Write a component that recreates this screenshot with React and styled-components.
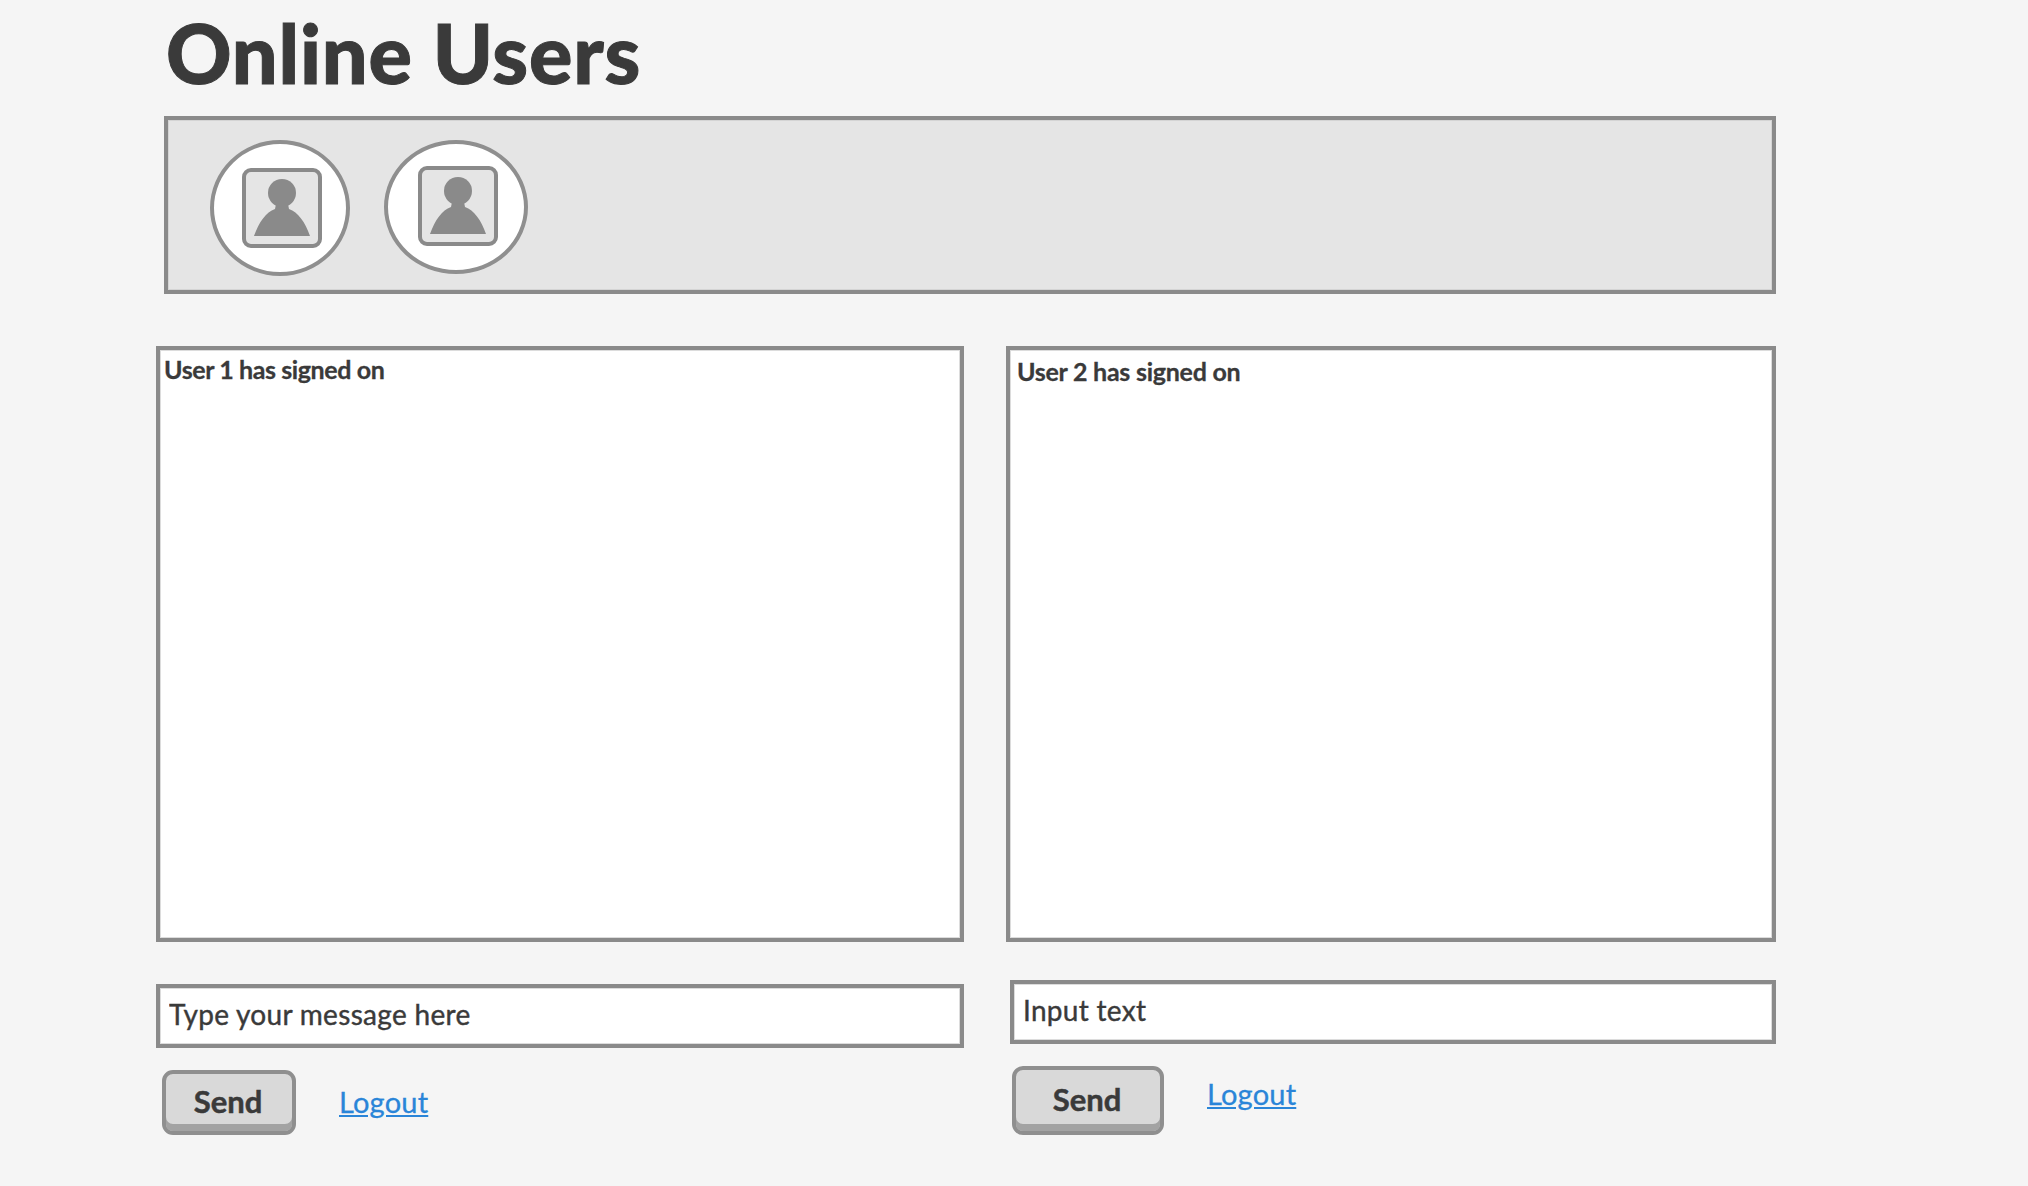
import React from 'react';
import styled, { createGlobalStyle } from 'styled-components';

const GlobalStyle = createGlobalStyle`
  html, body {
    margin: 0;
    background: #f5f5f5;
  }
  body {
    font-family: Lato, "Open Sans", sans-serif;
    color: #3a3a3a;
  }
`;

export default function App() {
  return (
    <>
      <GlobalStyle />
      <Page>
        <Title>Online Users</Title>
        <UsersPanel>
          <Avatar $w={140} $h={136} $iconTop={28} $iconLeft={32} />
          <Avatar $w={144} $h={134} $iconTop={26} $iconLeft={34} />
        </UsersPanel>
        <Columns>
          <ChatColumn>
            <ChatLog>
              <SignOn $top={4} $left={4} $spacing={-0.4}>User 1 has signed on</SignOn>
            </ChatLog>
            <MessageInput $top={42} defaultValue="Type your message here" />
            <Actions $top={22} $left={6}>
              <SendButton $w={134} $h={65}>Send</SendButton>
              <LogoutLink $left={43} $top={10} href="#">Logout</LogoutLink>
            </Actions>
          </ChatColumn>
          <ChatColumn>
            <ChatLog>
              <SignOn $top={6} $left={7} $spacing={-0.25}>User 2 has signed on</SignOn>
            </ChatLog>
            <MessageInput $top={38} $left={4} defaultValue="Input text" />
            <Actions $top={22} $left={6}>
              <SendButton $w={152} $h={69}>Send</SendButton>
              <LogoutLink $left={43} $top={6} href="#">Logout</LogoutLink>
            </Actions>
          </ChatColumn>
        </Columns>
      </Page>
    </>
  );
}

function Avatar({ $w, $h, $iconTop, $iconLeft }) {
  return (
    <Circle $w={$w} $h={$h} $iconTop={$iconTop} $iconLeft={$iconLeft}>
      <svg width="80" height="80" viewBox="0 0 80 80">
        <rect x="2" y="2" width="76" height="76" rx="7" fill="#e5e5e5" stroke="#8a8a8a" strokeWidth="4" />
        <circle cx="40" cy="25" r="14" fill="#8a8a8a" />
        <path d="M34 36 L46 36 L47 41 C56 44 63 54 68 68 L12 68 C17 54 24 44 33 41 Z" fill="#8a8a8a" />
      </svg>
    </Circle>
  );
}

const Page = styled.div`
  width: 1620px;
  margin-left: 156px;
  box-sizing: border-box;
`;

const Title = styled.h1`
  margin: 0 0 0 10px;
  height: 116px;
  font-size: 81px;
  line-height: 105px;
  font-weight: 900;
  letter-spacing: 0.8px;
  color: #3a3a3a;
  -webkit-text-stroke: 1px #3a3a3a;
`;

const UsersPanel = styled.div`
  margin-left: 8px;
  height: 178px;
  box-sizing: border-box;
  display: flex;
  align-items: flex-start;
  gap: 34px;
  padding: 20px 0 0 42px;
  background: #e5e5e5;
  border: 4px solid #8a8a8a;
  box-shadow: inset 0 0 0 1px #d4d4d4;
`;

const Circle = styled.div`
  width: ${(p) => p.$w}px;
  height: ${(p) => p.$h}px;
  box-sizing: border-box;
  flex: none;
  padding: ${(p) => p.$iconTop - 4}px 0 0 ${(p) => p.$iconLeft - 4}px;
  background: #fff;
  border: 4px solid #8f8f8f;
  border-radius: 50%;
  filter: blur(0.4px);

  svg {
    display: block;
  }
`;

const Columns = styled.div`
  display: grid;
  grid-template-columns: 808px 770px;
  column-gap: 42px;
  margin-top: 52px;
`;

const ChatColumn = styled.section`
  display: flex;
  flex-direction: column;
`;

const ChatLog = styled.div`
  height: 596px;
  box-sizing: border-box;
  background: #fff;
  border: 4px solid #8a8a8a;
  box-shadow: inset 0 0 0 1px #dcdcdc;
`;

const SignOn = styled.div`
  margin: ${(p) => p.$top}px 0 0 ${(p) => p.$left}px;
  font-size: 25px;
  line-height: 30px;
  font-weight: 700;
  letter-spacing: ${(p) => p.$spacing}px;
  -webkit-text-stroke: 0.3px #3a3a3a;
`;

const MessageInput = styled.input`
  display: block;
  margin: ${(p) => p.$top}px 0 0 ${(p) => p.$left || 0}px;
  height: 64px;
  box-sizing: border-box;
  padding: 0 9px 5px;
  background: #fff;
  border: 4px solid #8a8a8a;
  border-radius: 0;
  box-shadow: inset 0 0 0 1px #dcdcdc;
  outline: none;
  font-family: Lato, "Open Sans", sans-serif;
  font-size: 28px;
  letter-spacing: 0.3px;
  color: #3a3a3a;
  -webkit-text-stroke: 0.4px #3a3a3a;
`;

const Actions = styled.div`
  display: flex;
  align-items: flex-start;
  margin: ${(p) => p.$top}px 0 0 ${(p) => p.$left}px;
`;

const SendButton = styled.button`
  width: ${(p) => p.$w}px;
  height: ${(p) => p.$h}px;
  box-sizing: border-box;
  padding: 0 2px 4px 0;
  background: #d9d9d9;
  border: 4px solid #8f8f8f;
  border-radius: 11px;
  box-shadow: inset 0 -7px 0 #a3a3a3;
  font-family: Lato, "Open Sans", sans-serif;
  font-size: 31px;
  font-weight: 700;
  color: #3a3a3a;
  -webkit-text-stroke: 0.5px #3a3a3a;
`;

const LogoutLink = styled.a`
  margin: ${(p) => p.$top}px 0 0 ${(p) => p.$left}px;
  font-size: 29px;
  line-height: 44px;
  letter-spacing: 0.2px;
  color: #2a85d8;
  text-decoration: underline;
  -webkit-text-stroke: 0.3px #2a85d8;
`;
